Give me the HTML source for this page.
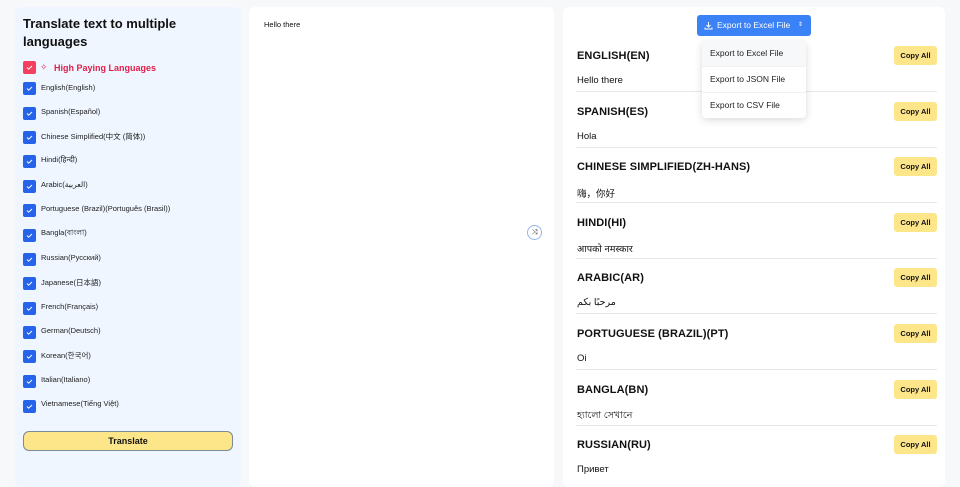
<!DOCTYPE html>
<html><head><meta charset="utf-8"><style>
*{box-sizing:border-box;margin:0;padding:0}
body{width:960px;height:480px;overflow:hidden;background:#f7f8fa;font-family:"Liberation Sans","Noto Sans CJK SC",sans-serif;position:relative;color:#111}
.left{position:absolute;left:15px;top:7px;width:226px;height:480px;background:#eff6ff;border-radius:6px}
.mid{position:absolute;left:249px;top:7px;width:305px;height:480px;background:#fff;border-radius:6px}
.right{position:absolute;left:563px;top:7px;width:382px;height:480px;background:#fff;border-radius:6px}
h1{position:absolute;left:23px;top:15px;font-size:13px;line-height:18px;font-weight:700;width:200px}
.cb{position:absolute;left:23px;width:13px;height:13px;background:#2563eb;border-radius:2px}
.cb svg{position:absolute;left:2px;top:2px}
.lbl{position:absolute;left:41px;font-size:7.5px;color:#222}
.hp{position:absolute;left:54px;top:63px;font-size:9px;font-weight:700;color:#e11d48}
.tbtn{position:absolute;left:23px;top:431px;width:210px;height:20px;background:#fde68a;border:1px solid #7a8a99;border-radius:6px;font-size:9px;font-weight:700;text-align:center;line-height:18px}
.sec{position:absolute;left:577px;width:360px}
.sec h2{position:absolute;left:0;top:1px;font-size:11px;font-weight:700;letter-spacing:.1px}
.sec p{position:absolute;left:0;top:26px;font-size:9.5px;font-family:"Liberation Sans","Noto Sans CJK SC","DejaVu Sans",sans-serif}
.sec .ln{position:absolute;left:-1px;top:42px;width:361px;height:1px;background:#e5e7eb}
.copy{position:absolute;left:317px;top:-3px;width:43px;height:19px;background:#fde68a;border-radius:3px;font-size:7.5px;font-weight:700;text-align:center;line-height:19px}
.exp{position:absolute;left:697px;top:15px;width:114px;height:21px;background:#3b82f6;border-radius:3px;color:#fff;font-size:8.5px;line-height:21px;padding-left:20px}
.menu{position:absolute;left:702px;top:41px;width:104px;height:77px;background:#fff;border-radius:4px;box-shadow:0 2px 8px rgba(0,0,0,.15)}
.menu div{height:26px;line-height:25px;padding-left:8px;font-size:8.5px;color:#222;border-bottom:1px solid #f1f1f1}
</style></head><body>
<div class="left"></div><div class="mid"></div><div class="right"></div>
<h1>Translate text to multiple languages</h1>
<div class="cb" style="top:61px;background:#f43f5e"><svg width="9" height="9" viewBox="0 0 9 9"><path d="M2 4.5l1.7 1.7L7 3" stroke="#fff" stroke-width="1" fill="none"/></svg></div>
<div style="position:absolute;left:40px;top:62px;font-size:9px;color:#e11d48">✧</div>
<div class="hp">High Paying Languages</div>
<div class="cb" style="top:82px"><svg width="9" height="9" viewBox="0 0 9 9"><path d="M2 4.5l1.7 1.7L7 3" stroke="#fff" stroke-width="1" fill="none"/></svg></div><div class="lbl" style="top:83px">English(English)</div>
<div class="cb" style="top:107px"><svg width="9" height="9" viewBox="0 0 9 9"><path d="M2 4.5l1.7 1.7L7 3" stroke="#fff" stroke-width="1" fill="none"/></svg></div><div class="lbl" style="top:107px">Spanish(Español)</div>
<div class="cb" style="top:131px"><svg width="9" height="9" viewBox="0 0 9 9"><path d="M2 4.5l1.7 1.7L7 3" stroke="#fff" stroke-width="1" fill="none"/></svg></div><div class="lbl" style="top:131px">Chinese Simplified(中文 (简体))</div>
<div class="cb" style="top:155px"><svg width="9" height="9" viewBox="0 0 9 9"><path d="M2 4.5l1.7 1.7L7 3" stroke="#fff" stroke-width="1" fill="none"/></svg></div><div class="lbl" style="top:155px">Hindi(हिन्दी)</div>
<div class="cb" style="top:180px"><svg width="9" height="9" viewBox="0 0 9 9"><path d="M2 4.5l1.7 1.7L7 3" stroke="#fff" stroke-width="1" fill="none"/></svg></div><div class="lbl" style="top:180px">Arabic(العربية)</div>
<div class="cb" style="top:204px"><svg width="9" height="9" viewBox="0 0 9 9"><path d="M2 4.5l1.7 1.7L7 3" stroke="#fff" stroke-width="1" fill="none"/></svg></div><div class="lbl" style="top:204px">Portuguese (Brazil)(Português (Brasil))</div>
<div class="cb" style="top:229px"><svg width="9" height="9" viewBox="0 0 9 9"><path d="M2 4.5l1.7 1.7L7 3" stroke="#fff" stroke-width="1" fill="none"/></svg></div><div class="lbl" style="top:228px">Bangla(বাংলা)</div>
<div class="cb" style="top:253px"><svg width="9" height="9" viewBox="0 0 9 9"><path d="M2 4.5l1.7 1.7L7 3" stroke="#fff" stroke-width="1" fill="none"/></svg></div><div class="lbl" style="top:253px">Russian(Русский)</div>
<div class="cb" style="top:277px"><svg width="9" height="9" viewBox="0 0 9 9"><path d="M2 4.5l1.7 1.7L7 3" stroke="#fff" stroke-width="1" fill="none"/></svg></div><div class="lbl" style="top:277px">Japanese(日本語)</div>
<div class="cb" style="top:302px"><svg width="9" height="9" viewBox="0 0 9 9"><path d="M2 4.5l1.7 1.7L7 3" stroke="#fff" stroke-width="1" fill="none"/></svg></div><div class="lbl" style="top:302px">French(Français)</div>
<div class="cb" style="top:326px"><svg width="9" height="9" viewBox="0 0 9 9"><path d="M2 4.5l1.7 1.7L7 3" stroke="#fff" stroke-width="1" fill="none"/></svg></div><div class="lbl" style="top:326px">German(Deutsch)</div>
<div class="cb" style="top:350px"><svg width="9" height="9" viewBox="0 0 9 9"><path d="M2 4.5l1.7 1.7L7 3" stroke="#fff" stroke-width="1" fill="none"/></svg></div><div class="lbl" style="top:350px">Korean(한국어)</div>
<div class="cb" style="top:375px"><svg width="9" height="9" viewBox="0 0 9 9"><path d="M2 4.5l1.7 1.7L7 3" stroke="#fff" stroke-width="1" fill="none"/></svg></div><div class="lbl" style="top:375px">Italian(Italiano)</div>
<div class="cb" style="top:400px"><svg width="9" height="9" viewBox="0 0 9 9"><path d="M2 4.5l1.7 1.7L7 3" stroke="#fff" stroke-width="1" fill="none"/></svg></div><div class="lbl" style="top:399px">Vietnamese(Tiếng Việt)</div>
<div class="tbtn">Translate</div>
<div style="position:absolute;left:264px;top:20px;font-size:7.5px">Hello there</div>
<div style="position:absolute;left:527px;top:225px;width:15px;height:15px;border:1px solid #93b4f0;border-radius:50%;background:#fff;font-size:7px;text-align:center;line-height:13px;color:#333">⤨</div>
<div class="sec" style="top:49px"><h2>ENGLISH(EN)</h2><div class="copy">Copy All</div><p>Hello there</p><div class="ln"></div></div>
<div class="sec" style="top:105px"><h2>SPANISH(ES)</h2><div class="copy">Copy All</div><p>Hola</p><div class="ln"></div></div>
<div class="sec" style="top:160px"><h2>CHINESE SIMPLIFIED(ZH-HANS)</h2><div class="copy">Copy All</div><p>嗨，你好</p><div class="ln"></div></div>
<div class="sec" style="top:216px"><h2>HINDI(HI)</h2><div class="copy">Copy All</div><p>आपको नमस्कार</p><div class="ln"></div></div>
<div class="sec" style="top:271px"><h2>ARABIC(AR)</h2><div class="copy">Copy All</div><p>مرحبًا بكم</p><div class="ln"></div></div>
<div class="sec" style="top:327px"><h2>PORTUGUESE (BRAZIL)(PT)</h2><div class="copy">Copy All</div><p>Oi</p><div class="ln"></div></div>
<div class="sec" style="top:383px"><h2>BANGLA(BN)</h2><div class="copy">Copy All</div><p>হ্যালো সেখানে</p><div class="ln"></div></div>
<div class="sec" style="top:438px"><h2>RUSSIAN(RU)</h2><div class="copy">Copy All</div><p>Привет</p></div>
<div class="exp"><svg style="position:absolute;left:7px;top:6px" width="9" height="9" viewBox="0 0 9 9"><path d="M4.5 1v5M2.5 4l2 2 2-2M1 6.5v1.5h7V6.5" stroke="#fff" stroke-width="1" fill="none"/></svg>Export to Excel File<span style="position:absolute;right:8px;font-size:6px">⇕</span></div>
<div class="menu"><div style="background:#f7f8fa">Export to Excel File</div><div>Export to JSON File</div><div style="border:none">Export to CSV File</div></div>
</body></html>
